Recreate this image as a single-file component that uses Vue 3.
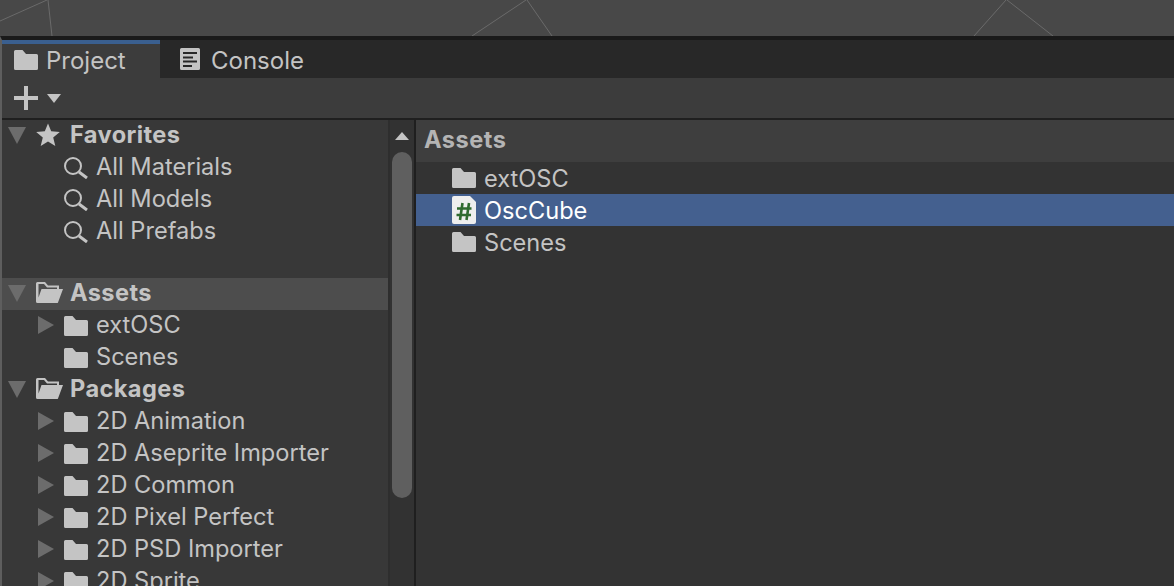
<template>
  <div class="window">
    <svg class="scene-lines" width="1174" height="36" viewBox="0 0 1174 36">
      <path d="M0 21 L47 0 M48 0 L52 36 M472 36 L526 0 M527 0 L552 36 M974 36 L1006 0 M1007 0 L1053 36" />
    </svg>
    <div class="scene"></div>
    <div class="panel">
      <div class="tabs">
        <div class="tab active">
          <svg class="tab-icon" viewBox="0 0 24 24"><path :d="folderPath" /></svg>
          <span>Project</span>
        </div>
        <div class="tab">
          <svg class="tab-icon console" viewBox="0 0 20 22">
            <path fill-rule="evenodd" d="M1.500 0H18.500A1.500 1.500 0 0 1 20 1.500V20.500A1.500 1.500 0 0 1 18.500 22H1.500A1.500 1.500 0 0 1 0 20.500V1.500A1.500 1.500 0 0 1 1.500 0ZM3 4V6H17V4ZM3 8.500V10.500H13V8.500ZM3 12.500V14.500H17V12.500ZM3 17V19H12V17Z" />
          </svg>
          <span>Console</span>
        </div>
      </div>
      <div class="toolbar">
        <svg class="plus" viewBox="0 0 24 24"><path d="M10 0H14V10H24V14H14V24H10V14H0V10H10Z" /></svg>
        <span class="arrow-down"></span>
      </div>
      <div class="split">
        <div class="tree">
          <div class="tree-list">
            <div
              v-for="row in treeRows"
              :key="row.label"
              class="row"
              :class="[row.kind, { child: row.depth === 1, highlight: row.highlight, spaced: row.spaced }]"
            >
              <span class="fold" :class="row.fold"></span>
              <svg v-if="row.kind === 'search'" class="icon" viewBox="0 0 24 24" fill="none">
                <circle cx="9" cy="11" r="8" class="lens" />
                <path d="M15 17L23 23" class="handle" />
              </svg>
              <svg v-else-if="row.kind === 'star'" class="icon" viewBox="0 0 24 24">
                <path d="M12 0.500L15.200 8.300L23.800 9L17.200 14.500L19.300 23L12 18.400L4.700 23L6.800 14.500L0.200 9L8.800 8.300Z" />
              </svg>
              <svg v-else-if="row.kind === 'open'" class="icon wide" viewBox="0 0 27 22">
                <path :d="openFolderPath" />
              </svg>
              <svg v-else class="icon" viewBox="0 0 24 24"><path :d="folderPath" /></svg>
              <span class="label">{{ row.label }}</span>
            </div>
          </div>
          <div class="scrollbar">
            <span class="arrow-up"></span>
            <div class="thumb"></div>
          </div>
        </div>
        <div class="content">
          <div class="crumb">Assets</div>
          <div class="files">
            <div v-for="file in files" :key="file.name" class="file" :class="{ selected: file.script }">
              <span v-if="file.script" class="script-icon">
                <svg viewBox="0 0 24 28">
                  <path class="sheet" d="M2 0H18L24 6V26a2 2 0 0 1-2 2H2a2 2 0 0 1-2-2V2a2 2 0 0 1 2-2Z" />
                  <path class="hash" d="M10.500 7L8 24M17 7L14.500 24M5 12.500H19.500M4.500 19H19" />
                </svg>
              </span>
              <svg v-else class="icon" viewBox="0 0 24 24"><path :d="folderPath" /></svg>
              <span class="label">{{ file.name }}</span>
            </div>
          </div>
        </div>
      </div>
    </div>
  </div>
</template>

<script setup>
const folderPath = 'M1.500 2H8.500L12 6H22.500A1.500 1.500 0 0 1 24 7.500V20.500A1.500 1.500 0 0 1 22.500 22H1.500A1.500 1.500 0 0 1 0 20.500V3.500A1.500 1.500 0 0 1 1.500 2Z'
const openFolderPath = 'M1.500 0H9L12 3.500H23V7H21V5.500H11L8 2H2.500V15.500L5.500 7H27L22 20.500A1 1 0 0 1 21 21H1.500A1.500 1.500 0 0 1 0 19.500V1.500A1.500 1.500 0 0 1 1.500 0Z'

const treeRows = [
  { label: 'Favorites', kind: 'star', fold: 'open', depth: 0 },
  { label: 'All Materials', kind: 'search', depth: 1 },
  { label: 'All Models', kind: 'search', depth: 1 },
  { label: 'All Prefabs', kind: 'search', depth: 1 },
  { label: 'Assets', kind: 'open', fold: 'open', depth: 0, highlight: true, spaced: true },
  { label: 'extOSC', kind: 'folder', fold: 'closed', depth: 1 },
  { label: 'Scenes', kind: 'folder', depth: 1 },
  { label: 'Packages', kind: 'open', fold: 'open', depth: 0 },
  { label: '2D Animation', kind: 'folder', fold: 'closed', depth: 1 },
  { label: '2D Aseprite Importer', kind: 'folder', fold: 'closed', depth: 1 },
  { label: '2D Common', kind: 'folder', fold: 'closed', depth: 1 },
  { label: '2D Pixel Perfect', kind: 'folder', fold: 'closed', depth: 1 },
  { label: '2D PSD Importer', kind: 'folder', fold: 'closed', depth: 1 },
  { label: '2D Sprite', kind: 'folder', fold: 'closed', depth: 1 }
]

const files = [
  { name: 'extOSC' },
  { name: 'OscCube', script: true },
  { name: 'Scenes' }
]
</script>

<style>
html, body {
  margin: 0;
  background: #383838;
  overflow: hidden;
}
</style>

<style scoped>
.window {
  position: relative;
  width: 1174px;
  height: 586px;
  overflow: hidden;
  display: flex;
  flex-direction: column;
  font-family: Inter, "Liberation Sans", sans-serif;
  font-size: 23.600px;
  color: #c4c4c4;
  background: #383838;
}

.scene {
  height: 36px;
  flex-shrink: 0;
  background: #484848;
}

.scene-lines {
  position: absolute;
  top: 0;
  left: 0;
  z-index: 1;
}

.scene-lines path {
  fill: none;
  stroke: #6a6a6a;
  stroke-width: 1;
}

.panel {
  flex: 1;
  min-height: 0;
  display: flex;
  flex-direction: column;
  border-top: 4px solid #1a1a1a;
  border-left: 2px solid #5e5e5e;
}

.tabs {
  height: 38px;
  flex-shrink: 0;
  display: flex;
  background: #282828;
}

.tab {
  height: 38px;
  box-sizing: border-box;
  display: flex;
  align-items: center;
  gap: 11px;
  padding: 2px 0 0 20px;
  width: 158px;
  font-size: 24px;
}

.tab.active {
  background: #3c3c3c;
  padding-left: 12px;
  gap: 8px;
  box-shadow: inset 0 4px 0 #3a5f8f;
}

.tab-icon {
  width: 24px;
  height: 24px;
  fill: #c4c4c4;
  flex-shrink: 0;
}

.tab-icon.console {
  width: 20px;
  height: 22px;
  margin-top: -2px;
}

.toolbar {
  height: 42px;
  box-sizing: border-box;
  flex-shrink: 0;
  display: flex;
  align-items: center;
  gap: 9px;
  padding-left: 12px;
  background: #3c3c3c;
  border-bottom: 2px solid #1f1f1f;
}

.plus {
  width: 24px;
  height: 24px;
  fill: #c4c4c4;
}

.arrow-down {
  width: 0;
  height: 0;
  margin-top: 1px;
  border-left: 7px solid transparent;
  border-right: 7px solid transparent;
  border-top: 9px solid #c4c4c4;
}

.split {
  flex: 1;
  min-height: 0;
  display: flex;
}

.tree {
  width: 414px;
  flex-shrink: 0;
  display: flex;
  box-sizing: border-box;
  border-right: 2px solid #1f1f1f;
}

.tree-list {
  width: 386px;
  flex-shrink: 0;
  background: #383838;
}

.row {
  height: 32px;
  box-sizing: border-box;
  display: flex;
  align-items: center;
  padding: 0 0 2px 6px;
}

.row.child {
  padding-left: 0;
}

.row.spaced {
  margin-top: 30px;
}

.row.highlight {
  background: #4d4d4d;
}

.row.folder .icon {
  margin-top: 2px;
}

.row .label {
  margin-bottom: 2px;
}

.fold {
  width: 28px;
  flex-shrink: 0;
}

.child .fold {
  width: 62px;
  box-sizing: border-box;
  padding-left: 36px;
  display: flex;
}

.fold.open::before {
  content: "";
  display: block;
  width: 0;
  height: 0;
  border-left: 9px solid transparent;
  border-right: 9px solid transparent;
  border-top: 17px solid #6c6c6c;
}

.fold.closed::before {
  content: "";
  display: block;
  width: 0;
  height: 0;
  border-top: 9px solid transparent;
  border-bottom: 9px solid transparent;
  border-left: 16px solid #6c6c6c;
}

.icon {
  width: 24px;
  height: 24px;
  flex-shrink: 0;
  fill: #c4c4c4;
}

.icon.wide {
  width: 27px;
  height: 22px;
}

.lens {
  fill: none;
  stroke: #c4c4c4;
  stroke-width: 2;
}

.handle {
  fill: none;
  stroke: #c4c4c4;
  stroke-width: 3;
}

.label {
  margin-left: 8px;
  white-space: nowrap;
}

.star .label {
  margin-left: 10px;
}

.open .label {
  margin-left: 7px;
}

.star .label,
.open .label {
  font-weight: 700;
  letter-spacing: 0.400px;
}

.scrollbar {
  flex: 1;
  position: relative;
  background: #323232;
  border-left: 2px solid #2e2e2e;
}

.arrow-up {
  position: absolute;
  top: 12px;
  left: 5px;
  width: 0;
  height: 0;
  border-left: 7px solid transparent;
  border-right: 7px solid transparent;
  border-bottom: 8px solid #c4c4c4;
}

.thumb {
  position: absolute;
  top: 32px;
  left: 2px;
  width: 20px;
  height: 346px;
  border-radius: 10px;
  background: #5f5f5f;
}

.content {
  flex: 1;
  min-width: 0;
  background: #333333;
}

.crumb {
  height: 42px;
  padding: 0 0 4px 8px;
  box-sizing: border-box;
  display: flex;
  align-items: center;
  background: #3e3e3e;
  font-weight: 700;
  letter-spacing: 0.500px;
  color: #b4b4b4;
}

.file {
  height: 32px;
  display: flex;
  align-items: center;
  padding-left: 36px;
}

.file.selected {
  background: #44608f;
  color: #ffffff;
}

.script-icon {
  width: 24px;
  height: 28px;
  flex-shrink: 0;
  display: block;
}

.script-icon svg {
  display: block;
  width: 24px;
  height: 28px;
}

.sheet {
  fill: #eeeeee;
}

.hash {
  fill: none;
  stroke: #2f6a2f;
  stroke-width: 2.600;
}
</style>
